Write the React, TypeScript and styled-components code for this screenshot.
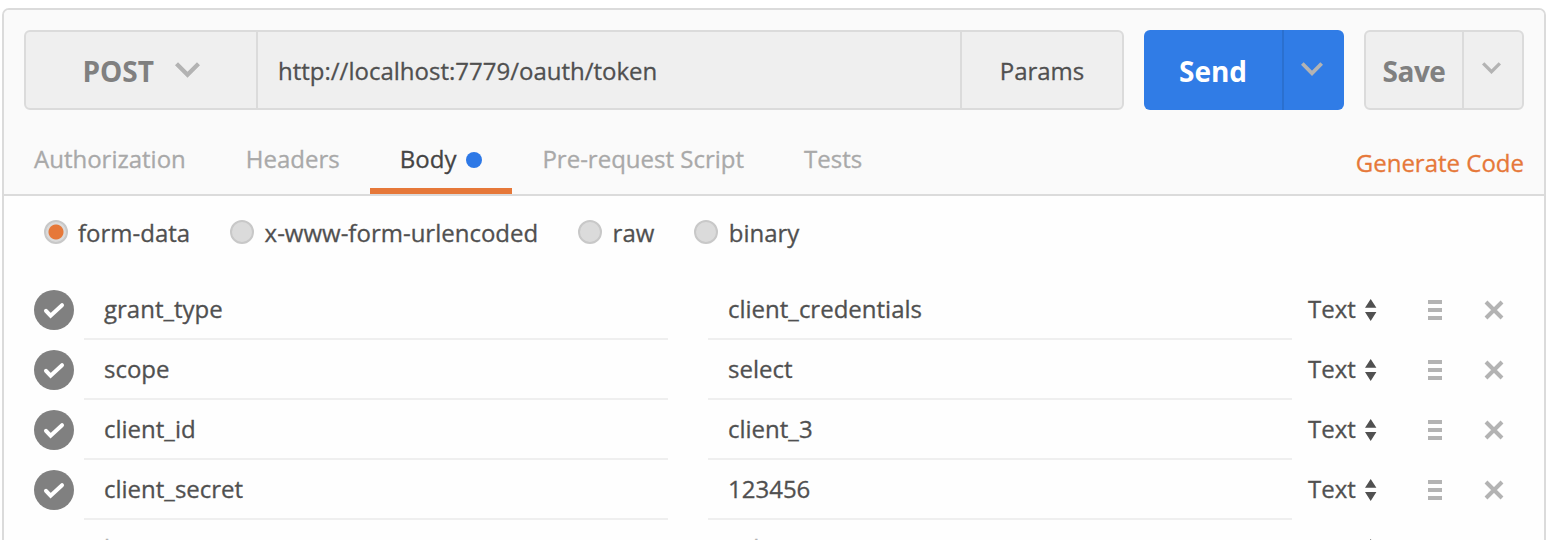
import React from 'react';
import styled, { createGlobalStyle } from 'styled-components';

const GlobalStyle = createGlobalStyle`
  * { box-sizing: border-box; }
  body {
    margin: 0;
    background: #fff;
    overflow: hidden;
    font-family: 'Open Sans', 'Noto Sans', sans-serif;
    font-size: 24px;
    line-height: 34px;
    color: #505050;
    -webkit-text-stroke: 0.3px currentColor;
  }
`;

const Page = styled.div`
  height: 540px;
  padding: 8px 14px 0 2px;
  overflow: hidden;
`;

const Panel = styled.main`
  height: 600px;
  border: 2px solid #dbdbdb;
  border-radius: 7px;
  background: #fefefe;
  overflow: hidden;
`;

const Header = styled.header`
  height: 186px;
  background: #fafafa;
  border-bottom: 2px solid #dbdbdb;
`;

const RequestBar = styled.div`
  display: flex;
  gap: 20px;
  padding: 20px 20px 0;
`;

const Group = styled.div<{ $width?: number; $primary?: boolean }>`
  display: flex;
  height: 80px;
  border-radius: 6px;
  overflow: hidden;
  ${(p) => (p.$width ? `width: ${p.$width}px;` : 'flex: 1;')}
  background: ${(p) => (p.$primary ? '#307ce6' : '#efefef')};
  border: ${(p) => (p.$primary ? '0' : '2px solid #dbdbdb')};
`;

const Segment = styled.div<{ $width?: number; $divider?: string; $inset?: number }>`
  display: flex;
  align-items: center;
  justify-content: center;
  padding: 1px ${(p) => p.$inset ?? 0}px 0 0;
  ${(p) => (p.$width ? `width: ${p.$width}px; flex: none;` : 'flex: 1;')}
  ${(p) => p.$divider && `border-left: 2px solid ${p.$divider};`}
`;

const UrlField = styled(Segment)`
  justify-content: flex-start;
  padding-left: 20px;
`;

const ActionLabel = styled.span<{ $color?: string; $tight?: boolean }>`
  font-size: 28px;
  font-weight: 700;
  -webkit-text-stroke: 0;
  letter-spacing: ${(p) => (p.$tight ? '-0.5px' : 'normal')};
  color: ${(p) => p.$color ?? '#808080'};
`;

const ChevronSvg = styled.svg<{ $gap?: number; $lift?: number }>`
  display: block;
  margin-left: ${(p) => p.$gap ?? 0}px;
  margin-bottom: ${(p) => p.$lift ?? 0}px;
`;

const Chevron = ({ size, gap, lift }: { size: number; gap?: number; lift?: number }) => (
  <ChevronSvg $gap={gap} $lift={lift} width={size} height={size * 0.62} viewBox="0 0 25 15.5">
    <path d="M1.5 1.7 12.5 12.8 23.5 1.7" fill="none" stroke="#b3b3b3" strokeWidth="4.3" />
  </ChevronSvg>
);

const TabRow = styled.nav`
  display: flex;
  height: 84px;
`;

const Tab = styled.div<{ $active?: boolean }>`
  display: flex;
  gap: 10px;
  height: 84px;
  padding: 32px 30px 0;
  color: ${(p) => (p.$active ? '#444' : '#a9a9a9')};
  border-bottom: 6px solid ${(p) => (p.$active ? '#e67839' : 'transparent')};
`;

const Dot = styled.span`
  width: 16px;
  height: 16px;
  margin-top: 10px;
  border-radius: 50%;
  background: #2d78e6;
`;

const CodeLink = styled.a`
  margin-left: auto;
  padding: 36px 20px 0 0;
  color: #e67839;
`;

const RadioRow = styled.div`
  display: flex;
  gap: 40px;
  height: 84px;
  padding: 24px 40px 0;
`;

const RadioOption = styled.label`
  display: flex;
  gap: 10px;
  line-height: 25px;

  & + & { column-gap: 10.4px; }
`;

const RadioCircle = styled.span<{ $on?: boolean }>`
  width: 24px;
  height: 24px;
  border: 2px solid #c8c8c8;
  border-radius: 50%;
  background: ${(p) =>
    p.$on ? 'radial-gradient(circle, #e67839 7px, #dbdbdb 8px)' : '#dbdbdb'};
`;

const ParamRow = styled.div`
  display: flex;
  height: 60px;
  padding-left: 30px;
`;

const CheckCell = styled.div`
  width: 50px;
  padding-top: 10px;
`;

const Field = styled.div<{ $placeholder?: boolean }>`
  width: 584px;
  margin-right: 40px;
  padding: ${(p) => (p.$placeholder ? 11 : 12)}px 20px 0;
  border-bottom: 2px solid #efefef;
  color: ${(p) => (p.$placeholder ? '#b3b3b3' : '#505050')};

  & + & { margin-right: 16px; }
`;

const TypeSelect = styled.div`
  display: flex;
  width: 120px;
  padding-top: 12px;
  justify-content: flex-start;
`;

const TypeLabel = styled.span`
  width: 57px;
`;

const IconCell = styled.div<{ $width: number }>`
  width: ${(p) => p.$width}px;
  padding-top: 18px;

  svg { display: block; }
`;

const SortIcon = styled.svg`
  margin-top: 7px;
`;

const CheckIcon = () => (
  <svg width="40" height="40" viewBox="0 0 40 40">
    <circle cx="20" cy="20" r="20" fill="#808080" />
    <path d="M12 20.8 16.6 25.7 28 15.2" fill="none" stroke="#fff" strokeWidth="4" strokeLinecap="round" />
  </svg>
);

const rows = [
  { name: 'grant_type', value: 'client_credentials' },
  { name: 'scope', value: 'select' },
  { name: 'client_id', value: 'client_3' },
  { name: 'client_secret', value: '123456' },
  { name: 'key', value: 'value', placeholder: true },
];

export default function App() {
  return (
    <Page>
      <GlobalStyle />
      <Panel>
        <Header>
          <RequestBar>
            <Group>
              <Segment $width={230}>
                <ActionLabel>POST</ActionLabel>
                <Chevron size={25} gap={20.5} lift={1} />
              </Segment>
              <UrlField $divider="#dbdbdb">http://localhost:7779/oauth/token</UrlField>
              <Segment $width={162} $divider="#dbdbdb">Params</Segment>
            </Group>
            <Group $width={200} $primary>
              <Segment $width={138}>
                <ActionLabel $color="#fff">Send</ActionLabel>
              </Segment>
              <Segment $divider="#2b70cf" $inset={4}>
                <Chevron size={22} lift={3} />
              </Segment>
            </Group>
            <Group $width={160}>
              <Segment $width={96}>
                <ActionLabel $tight>Save</ActionLabel>
              </Segment>
              <Segment $divider="#dbdbdb" $inset={4}>
                <Chevron size={19} lift={5} />
              </Segment>
            </Group>
          </RequestBar>
          <TabRow>
            <Tab>Authorization</Tab>
            <Tab>Headers</Tab>
            <Tab $active>
              Body
              <Dot />
            </Tab>
            <Tab>Pre-request Script</Tab>
            <Tab>Tests</Tab>
            <CodeLink>Generate Code</CodeLink>
          </TabRow>
        </Header>
        <RadioRow>
          {['form-data', 'x-www-form-urlencoded', 'raw', 'binary'].map((label, i) => (
            <RadioOption key={label}>
              <RadioCircle $on={i === 0} />
              {label}
            </RadioOption>
          ))}
        </RadioRow>
        {rows.map((row) => (
          <ParamRow key={row.name}>
            <CheckCell>{!row.placeholder && <CheckIcon />}</CheckCell>
            <Field $placeholder={row.placeholder}>{row.name}</Field>
            <Field $placeholder={row.placeholder}>{row.value}</Field>
            <TypeSelect>
              <TypeLabel>{!row.placeholder && 'Text'}</TypeLabel>
              <SortIcon width="12" height="22" viewBox="0 0 12 22">
                <path d="M0 8.7 5.7 0 11.4 8.7ZM0 13 11.4 13 5.7 22Z" fill="#505050" />
              </SortIcon>
            </TypeSelect>
            <IconCell $width={56}>
              <svg width="14" height="24" viewBox="0 0 14 24">
                <path d="M0 2h14v4H0zM0 10h14v4H0zM0 18h14v4H0z" fill="#b3b3b3" />
              </svg>
            </IconCell>
            <IconCell $width={24}>
              <svg width="20" height="24" viewBox="0 0 20 24">
                <path d="M2 4 18 20M18 4 2 20" stroke="#b3b3b3" strokeWidth="4" />
              </svg>
            </IconCell>
          </ParamRow>
        ))}
      </Panel>
    </Page>
  );
}
